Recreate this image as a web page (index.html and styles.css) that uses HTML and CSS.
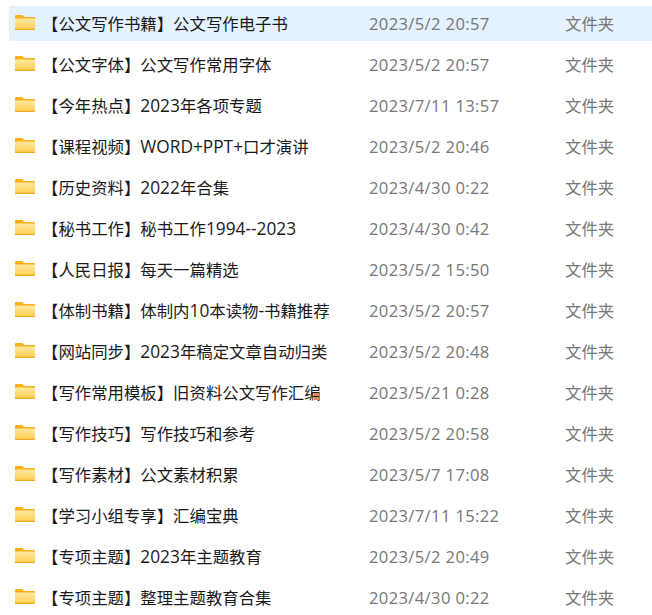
FILE: index.html
```html
<!DOCTYPE html>
<html>
<head>
<meta name="viewport" content="width=device-width, initial-scale=1">
<link rel="stylesheet" href="styles.css">
</head>
<body>

<svg class="defs" width="0" height="0">
  <defs>
    <linearGradient id="folderfill" x1="0" y1="0" x2="0" y2="1">
      <stop offset="0" stop-color="#ffe9a0"/>
      <stop offset="1" stop-color="#ffd056"/>
    </linearGradient>
    <symbol id="folder" viewBox="0 0 20 15">
      <path d="M0 1.2C0 .5.5 0 1.2 0h5.6c.6 0 1 .2 1.3.6L9 2h11v2H0z" fill="#fbb116"/>
      <path d="M0 3h20v12H0z" fill="#eeaa22"/>
      <path d="M0 3.5h20v10.3H0z" fill="url(#folderfill)"/>
    </symbol>
  </defs>
</svg>

<div class="list">
  <div class="row selected">
    <svg class="icon"><use href="#folder"/></svg>
    <span class="name">【公文写作书籍】公文写作电子书</span>
    <span class="date">2023/5/2 20:57</span>
    <span class="type">文件夹</span>
  </div>
  <div class="row">
    <svg class="icon"><use href="#folder"/></svg>
    <span class="name">【公文字体】公文写作常用字体</span>
    <span class="date">2023/5/2 20:57</span>
    <span class="type">文件夹</span>
  </div>
  <div class="row">
    <svg class="icon"><use href="#folder"/></svg>
    <span class="name">【今年热点】<span class="latin">2023</span>年各项专题</span>
    <span class="date">2023/7/11 13:57</span>
    <span class="type">文件夹</span>
  </div>
  <div class="row">
    <svg class="icon"><use href="#folder"/></svg>
    <span class="name">【课程视频】<span class="latin">WORD+PPT+</span>口才演讲</span>
    <span class="date">2023/5/2 20:46</span>
    <span class="type">文件夹</span>
  </div>
  <div class="row">
    <svg class="icon"><use href="#folder"/></svg>
    <span class="name">【历史资料】<span class="latin">2022</span>年合集</span>
    <span class="date">2023/4/30 0:22</span>
    <span class="type">文件夹</span>
  </div>
  <div class="row">
    <svg class="icon"><use href="#folder"/></svg>
    <span class="name">【秘书工作】秘书工作<span class="latin">1994--2023</span></span>
    <span class="date">2023/4/30 0:42</span>
    <span class="type">文件夹</span>
  </div>
  <div class="row">
    <svg class="icon"><use href="#folder"/></svg>
    <span class="name">【人民日报】每天一篇精选</span>
    <span class="date">2023/5/2 15:50</span>
    <span class="type">文件夹</span>
  </div>
  <div class="row">
    <svg class="icon"><use href="#folder"/></svg>
    <span class="name">【体制书籍】体制内<span class="latin">10</span>本读物<span class="latin">-</span>书籍推荐</span>
    <span class="date">2023/5/2 20:57</span>
    <span class="type">文件夹</span>
  </div>
  <div class="row">
    <svg class="icon"><use href="#folder"/></svg>
    <span class="name">【网站同步】<span class="latin">2023</span>年稿定文章自动归类</span>
    <span class="date">2023/5/2 20:48</span>
    <span class="type">文件夹</span>
  </div>
  <div class="row">
    <svg class="icon"><use href="#folder"/></svg>
    <span class="name">【写作常用模板】旧资料公文写作汇编</span>
    <span class="date">2023/5/21 0:28</span>
    <span class="type">文件夹</span>
  </div>
  <div class="row">
    <svg class="icon"><use href="#folder"/></svg>
    <span class="name">【写作技巧】写作技巧和参考</span>
    <span class="date">2023/5/2 20:58</span>
    <span class="type">文件夹</span>
  </div>
  <div class="row">
    <svg class="icon"><use href="#folder"/></svg>
    <span class="name">【写作素材】公文素材积累</span>
    <span class="date">2023/5/7 17:08</span>
    <span class="type">文件夹</span>
  </div>
  <div class="row">
    <svg class="icon"><use href="#folder"/></svg>
    <span class="name">【学习小组专享】汇编宝典</span>
    <span class="date">2023/7/11 15:22</span>
    <span class="type">文件夹</span>
  </div>
  <div class="row">
    <svg class="icon"><use href="#folder"/></svg>
    <span class="name">【专项主题】<span class="latin">2023</span>年主题教育</span>
    <span class="date">2023/5/2 20:49</span>
    <span class="type">文件夹</span>
  </div>
  <div class="row">
    <svg class="icon"><use href="#folder"/></svg>
    <span class="name">【专项主题】整理主题教育合集</span>
    <span class="date">2023/4/30 0:22</span>
    <span class="type">文件夹</span>
  </div>
</div>

</body>
</html>
```

FILE: styles.css
```css
html, body {
    height: 100%;
    overflow: hidden;
}

body {
    margin: 0;
    background-color: #fff;
    font-family: "Open Sans", "Noto Sans CJK SC", sans-serif;
}

.defs {
    display: block;
    height: 0;
}

/* File list */
.list {
    display: flex;
    flex-direction: column;
    gap: 6px;
    padding: 6px 0 0 9px;
}

.row {
    display: flex;
    flex: none;
    align-items: center;
    height: 35px;
    padding-left: 6px;
    border-radius: 2px 0 0 2px;
}

.row.selected {
    background-color: #e3f2fe;
}

.icon {
    flex: none;
    width: 20px;
    height: 15px;
    margin: -3px 7px 0 0;
}

.name {
    flex: none;
    width: 327px;
    font-size: 16.4px;
    line-height: 22px;
    color: #1a1a1a;
    white-space: nowrap;
}

.latin {
    font-size: 17.3px;
    line-height: 20px;
}

.date {
    flex: none;
    width: 196px;
    font-size: 16.6px;
    letter-spacing: 0.35px;
    line-height: 22px;
    color: #777;
    white-space: nowrap;
}

.type {
    font-size: 16.4px;
    line-height: 22px;
    color: #777;
    white-space: nowrap;
}
```
